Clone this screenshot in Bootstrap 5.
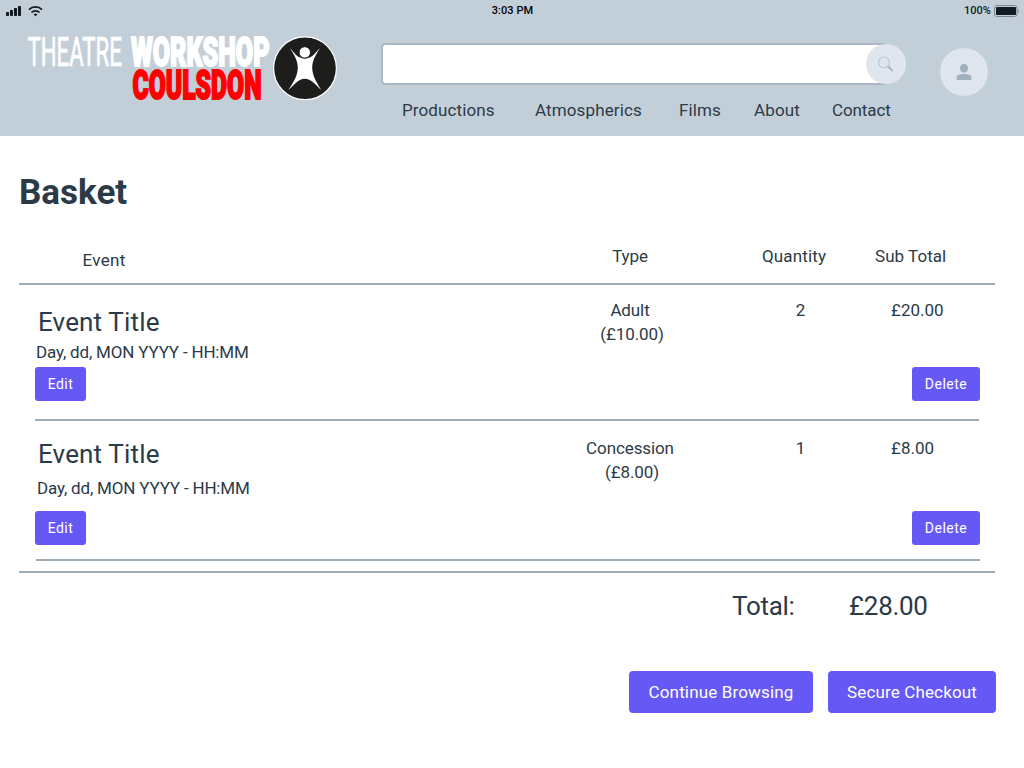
<!DOCTYPE html>
<html lang="en">
<head>
<meta charset="utf-8">
<meta name="viewport" content="width=device-width, initial-scale=1">
<title>Basket - Theatre Workshop Coulsdon</title>
<link href="https://cdn.jsdelivr.net/npm/bootstrap@5.3.0/dist/css/bootstrap.min.css" rel="stylesheet">
<style>
body{font-family:Roboto,"Liberation Sans",sans-serif;font-size:17px;line-height:24px;letter-spacing:.15px;color:#2b3a47;background:#fff;overflow:hidden}
.site-head{height:136px;background:#c3cfd8}
.status-bar{height:20px;padding:1px 5px 0 6px;color:#0f1a22;font-size:11px;font-weight:500;letter-spacing:.05px;line-height:20px}
.status-bar>div{flex:1 1 0;height:19px}
.head-main{height:116px;padding-left:26px}
.brand-logo{margin-top:12px}
.search-area{width:526px;margin-left:42px;padding-top:23px}
.search-field{width:505px;height:42px;border:2px solid #aab9c5;border-right:0;border-radius:4px 0 0 4px;background:#fff;padding:0 12px}
.search-btn{top:1px;right:1px;width:40px;height:40px;background:#dfe6ee;border:0;padding:0}
.main-links{margin-top:13px;padding-left:21px;letter-spacing:.12px}
.main-links a{color:inherit;text-decoration:none;white-space:nowrap}
.avatar-btn{width:48px;height:48px;margin:28px 0 0 33px;background:#dfe6ee;border:0;padding:0}
main{padding:0 29px 0 19px}
.page-title{font-size:35px;line-height:40px;font-weight:700;letter-spacing:0;margin:37px 0 0;height:71px}
.rule{height:2px;background:#9fadb9}
.list-head{height:39px}
.col-event{width:541px}
.col-type{width:140px;margin-right:24px;text-align:center;letter-spacing:-.1px}
.col-qty{width:140px;text-align:center}
.list-head .col-sub{padding-left:11px;letter-spacing:.05px}
.basket-item .col-qty{padding-left:13px}
.basket-item .col-sub{padding-left:27px;letter-spacing:0}
.price{padding-left:4px}
.basket-item .col-event{padding-left:17px}
.item-title{font-size:26px;line-height:32px;font-weight:400;letter-spacing:.15px;margin:0;padding-left:2px}
.item-date{letter-spacing:-.18px}
.item-actions{padding:0 15px 0 16px}
.btn-violet{--bs-btn-bg:#6558f5;--bs-btn-color:#fff;--bs-btn-hover-bg:#5447e0;--bs-btn-hover-color:#fff;--bs-btn-border-width:0;--bs-btn-border-radius:4px;--bs-btn-padding-x:0;--bs-btn-padding-y:0}
.btn-row{height:34px;font-size:14px;letter-spacing:.5px;--bs-btn-border-radius:3px}
.btn-edit{width:51px}.btn-delete{width:68px}
.btn-page{height:42px;font-size:17px;letter-spacing:.15px;padding-top:1px}
.total-line{font-size:26px;line-height:32px;letter-spacing:-.3px;padding:17px 0 0 713px}
.total-line span:first-child{width:117px}
</style>
</head>
<body>
<header class="site-head">
  <div class="status-bar d-flex">
    <div class="d-flex align-items-center">
      <svg width="38" height="14" viewBox="0 0 38 14" fill="#0f1a22">
        <rect x="0" y="8" width="3" height="4" rx=".7"/><rect x="4" y="6" width="3" height="6" rx=".7"/><rect x="8" y="4" width="3" height="8" rx=".7"/><rect x="12" y="2" width="3" height="10" rx=".7"/>
        <g fill="none" stroke="#0f1a22" stroke-width="1.7"><path d="M23 5.600a9.200 9.200 0 0 1 13 0"/><path d="M25.500 8.500a5.700 5.700 0 0 1 8 0"/></g>
        <path d="M27.700 10.400a2.600 2.600 0 0 1 3.600 0L29.500 12.200z"/>
      </svg>
    </div>
    <div class="text-center" style="color:#000">3:03 PM</div>
    <div class="d-flex justify-content-end align-items-center">
      <span style="margin-right:3px">100%</span>
      <svg width="25" height="12" viewBox="0 0 25 12"><rect x=".5" y=".5" width="22.500" height="11" rx="2.500" fill="none" stroke="#7b8790"/><rect x="2" y="2" width="20" height="8" rx=".8" fill="#0f1a22"/><path d="M23.700 4c1.500.6 1.500 3.400 0 4z" fill="#7b8790"/></svg>
    </div>
  </div>
  <div class="head-main d-flex align-items-start">
    <svg class="brand-logo" width="313" height="72" viewBox="26 32 313 72" role="img" aria-label="Theatre Workshop Coulsdon">
      <g font-family="Roboto, sans-serif" font-size="41" letter-spacing="0">
        <text transform="translate(27.500 66) scale(.53 1)" font-weight="400" fill="#fff" stroke="#fff" stroke-width=".7" textLength="178" lengthAdjust="spacingAndGlyphs">THEATRE</text>
        <text transform="translate(131 65.500) scale(.61 1)" font-weight="900" fill="#fff" stroke="#fff" stroke-width="2" font-size="40" textLength="227" lengthAdjust="spacingAndGlyphs">WORKSHOP</text>
        <text transform="translate(132.500 99) scale(.6 1)" font-weight="900" fill="#f00" stroke="#f00" stroke-width="2" font-size="40" textLength="215" lengthAdjust="spacingAndGlyphs">COULSDON</text>
      </g>
      <circle cx="305" cy="68.300" r="31.400" fill="#1d1d1b" stroke="#fff" stroke-width="1.200"/>
      <path fill="#fff" d="M290 48C294 52.500 297.500 58.600 304.800 58.600S315.500 52.500 320 48C316.500 54 312.200 60 312.200 67.500C312.200 76 317 83 321.300 90.300C317 86 311.500 78.800 304.800 78.800S293 86 288.300 90.300C293 83 297.800 76 297.800 67.500C297.800 60 293.500 54 290 48Z"/>
      <circle cx="304.800" cy="52.400" r="5.700" fill="#fff" stroke="#1d1d1b" stroke-width="1"/>
    </svg>
    <div class="search-area">
      <form class="position-relative">
        <input class="search-field d-block" type="text" aria-label="Search">
        <button class="search-btn position-absolute rounded-circle d-flex align-items-center justify-content-center" type="button" aria-label="Search">
          <svg width="18" height="18" viewBox="0 0 18 18" fill="none"><circle cx="7" cy="7.500" r="5.500" stroke="#bbc6d0" stroke-width="1.200"/><path d="M11 11.200L15.300 15.500" stroke="#a9b7c3" stroke-width="2" stroke-linecap="round"/></svg>
        </button>
      </form>
      <nav class="main-links d-flex">
        <a href="#" style="width:133px">Productions</a>
        <a href="#" style="width:144px">Atmospherics</a>
        <a href="#" style="width:75px">Films</a>
        <a href="#" style="width:78px">About</a>
        <a href="#" style="letter-spacing:-.1px">Contact</a>
      </nav>
    </div>
    <button class="avatar-btn rounded-circle d-flex align-items-center justify-content-center" type="button" aria-label="Account">
      <svg width="16" height="16" viewBox="0 0 16 16" fill="#a0b0bd"><ellipse cx="8" cy="4.300" rx="3.900" ry="4.200"/><path d="M.5 16v-2.300C.5 11 4 10 8 10s7.500 1 7.500 3.700V16z"/></svg>
    </button>
  </div>
</header>
<main>
  <h1 class="page-title">Basket</h1>
  <div class="list-head d-flex">
    <div class="col-event" style="padding:4px 0 0 63.500px;letter-spacing:.3px">Event</div>
    <div class="col-type">Type</div>
    <div class="col-qty">Quantity</div>
    <div class="col-sub">Sub Total</div>
  </div>
  <div class="rule"></div>
  <section class="basket-item">
    <div class="d-flex" style="height:82px;padding-top:13px">
      <div class="col-event"><h2 class="item-title" style="margin:8px 0 2px">Event Title</h2><div class="item-date">Day, dd, MON YYYY - HH:MM</div></div>
      <div class="col-type"><div>Adult</div><div class="price">(£10.00)</div></div>
      <div class="col-qty">2</div>
      <div class="col-sub">£20.00</div>
    </div>
    <div class="item-actions d-flex justify-content-between"><button class="btn btn-violet btn-row btn-edit">Edit</button><button class="btn btn-violet btn-row btn-delete">Delete</button></div>
    <div class="rule" style="margin:18px 16px 0"></div>
  </section>
  <section class="basket-item">
    <div class="d-flex" style="height:90px;padding-top:15px">
      <div class="col-event"><h2 class="item-title" style="margin:2px 0 6px">Event Title</h2><div class="item-date ps-1" style="margin-left:-3px">Day, dd, MON YYYY - HH:MM</div></div>
      <div class="col-type"><div>Concession</div><div class="price">(£8.00)</div></div>
      <div class="col-qty">1</div>
      <div class="col-sub">£8.00</div>
    </div>
    <div class="item-actions d-flex justify-content-between"><button class="btn btn-violet btn-row btn-edit">Edit</button><button class="btn btn-violet btn-row btn-delete">Delete</button></div>
    <div class="rule" style="margin:14px 15px 10px 17px"></div>
  </section>
  <div class="rule"></div>
  <div class="total-line d-flex"><span>Total:</span><span>£28.00</span></div>
  <div class="d-flex justify-content-end" style="gap:15px;margin:49px -1px 0 0">
    <button class="btn btn-violet btn-page" style="width:184px">Continue Browsing</button>
    <button class="btn btn-violet btn-page" style="width:168px">Secure Checkout</button>
  </div>
</main>
<script src="https://cdn.jsdelivr.net/npm/bootstrap@5.3.0/dist/js/bootstrap.bundle.min.js"></script>
</body>
</html>
